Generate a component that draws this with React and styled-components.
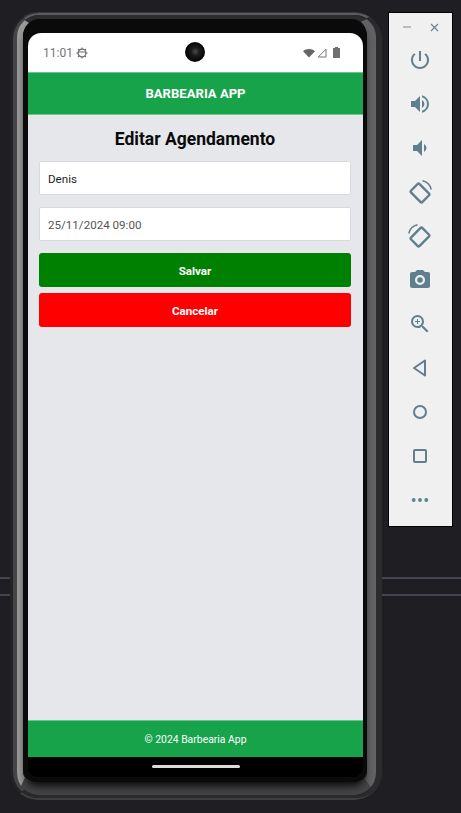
import React from "react";
import styled, { createGlobalStyle } from "styled-components";

const Global = createGlobalStyle`
  html, body { margin: 0; padding: 0; background: #1e1e23; }
  * { box-sizing: border-box; }
`;

const Page = styled.div`
  width: 461px;
  height: 813px;
  overflow: hidden;
  display: flex;
  align-items: flex-start;
  gap: 6px;
  padding: 12px 8px 13px 10px;
  font-family: Roboto, "Liberation Sans", sans-serif;
  background:
    linear-gradient(#45434f, #45434f) 0 577px / 100% 2px no-repeat,
    linear-gradient(#45434f, #45434f) 0 594px / 100% 2px no-repeat,
    #1e1e23;
`;

/* phone body is three nested rings, so the corners curve like the real frame */
const Phone = styled.div`
  width: 372px;
  height: 788px;
  flex: none;
  border-style: solid;
  border-color: #39393b transparent #3f3f41 #242427;
  border-width: 1px 0 2px 3px;
  border-radius: 28px;
`;

const Casing = styled.div`
  height: 100%;
  border-style: solid;
  border-color: #5c5c5e #2b2b2d #2a2a2c #454547;
  border-width: 2px 6px 3px 4px;
  border-radius: 26px;
`;

const Rail = styled.div`
  height: 100%;
  border-style: solid;
  border-color: #2c2c2e #626264 #454547 #9a9a9a;
  border-width: 4px 9px 13px 6px;
  border-radius: 22px;
`;

const Bezel = styled.div`
  height: 100%;
  padding: 14px 5px 5px;
  background: #0a0a0b;
  border-radius: 17px 17px 14px 14px;
  box-shadow: 0 7px 8px -3px #0a0a0b;
`;

const Screen = styled.div`
  position: relative;
  width: 335px;
  height: 744px;
  display: flex;
  flex-direction: column;
  overflow: hidden;
  background: #000;
  border-radius: 13px 13px 10px 10px;
`;

const StatusBar = styled.div`
  height: 39px;
  flex: none;
  display: flex;
  align-items: center;
  justify-content: space-between;
  padding: 0 23px 0 15px;
  background: #fff;
  color: #757575;
  font-size: 12px;
`;

const StatusGroup = styled.div`
  display: flex;
  align-items: center;
  gap: ${(p) => p.$gap}px;
`;

const CameraHole = styled.div`
  position: absolute;
  left: 157px;
  top: 9px;
  width: 20px;
  height: 20px;
  border-radius: 50%;
  background: radial-gradient(circle at 52% 48%, #4a4a4a 0, #1b1b1b 28%, #060606 65%);
`;

const GreenBar = styled.div`
  flex: none;
  height: ${(p) => p.$height}px;
  display: flex;
  align-items: center;
  justify-content: center;
  background: #16a34a;
  border-top: 1px solid #6cc48f;
  color: #fff;
  font-size: ${(p) => p.$size}px;
  font-weight: ${(p) => p.$weight};
`;

const Header = styled(GreenBar)`
  border-bottom: 1px solid #6cc48f;
`;

const Content = styled.main`
  flex: 1;
  display: flex;
  flex-direction: column;
  padding: 12px 12px 0 11px;
  background: #e5e7eb;
`;

const Title = styled.h1`
  margin: 0 0 9px;
  height: 25px;
  line-height: 25px;
  text-align: center;
  font-size: 17.5px;
  font-weight: 700;
  color: #0a0a0a;
`;

const Field = styled.input`
  width: 312px;
  height: 34px;
  margin-bottom: 12px;
  padding: 2px 8px 0;
  background: #fff;
  border: 1px solid #d8dbe0;
  border-radius: 2px;
  outline: none;
  font-family: inherit;
  font-size: 11.6px;
  color: ${(p) => p.$color};
`;

const Button = styled.button`
  width: 312px;
  height: 34px;
  margin-bottom: 6px;
  padding: 2px 0 0;
  border: 0;
  border-radius: 3px;
  background: ${(p) => p.$bg};
  color: #fff;
  font-family: inherit;
  font-size: 11.6px;
  font-weight: 700;
`;

const NavBar = styled.div`
  height: 20px;
  flex: none;
  display: flex;
  justify-content: center;
  padding-top: 8px;
  background: #000;
`;

const HomeIndicator = styled.div`
  width: 88px;
  height: 3px;
  border-radius: 2px;
  background: #dcdcdc;
`;

const Panel = styled.aside`
  width: 65px;
  height: 515px;
  flex: none;
  display: flex;
  flex-direction: column;
  align-items: center;
  background: #f0f0f0;
  border: 1px solid #000;
`;

const WindowControls = styled.div`
  height: 25px;
  width: 100%;
  display: flex;
  align-items: center;
  justify-content: center;
  gap: 19px;
  padding-top: 3px;
`;

const ToolList = styled.div`
  display: flex;
  flex-direction: column;
  align-items: center;
  margin-right: 1px;
`;

const Tool = styled.div`
  width: 44px;
  height: 44px;
  display: flex;
  align-items: center;
  justify-content: center;
`;

const INK = "#5f7f8e";

const ToolIcon = ({ children }) => (
  <Tool>
    <svg width="24" height="24" viewBox="0 0 24 24" fill={INK}>
      {children}
    </svg>
  </Tool>
);

const RotateShape = ({ flip }) => (
  <g transform={flip ? "translate(24 0) scale(-1 1)" : undefined} fill="none" stroke={INK}>
    <rect x="6" y="5" width="12" height="16" rx="1.5" strokeWidth="2.4" transform="rotate(-45 12 13)" />
    <path d="M14.5 .8A11.5 11.5 0 0 1 23.2 9.5" strokeWidth="1.5" />
  </g>
);

const App = () => (
  <>
    <Global />
    <Page>
      <Phone>
        <Casing>
          <Rail>
            <Bezel>
              <Screen>
                <CameraHole />
                <StatusBar>
                  <StatusGroup $gap={3}>
                    <span>11:01</span>
                    <svg width="12" height="12" viewBox="0 0 12 12" fill="none" stroke="#6f6f6f">
                      <circle cx="6" cy="6" r="3.9" strokeWidth="1.3" />
                      <path d="M2.2 5h7.6M6 .4v1.6M6 10v1.6M.4 6H2M10 6h1.6M2 2l1.2 1.2M8.8 8.8L10 10M10 2L8.8 3.2M3.2 8.8L2 10" strokeWidth="1.1" />
                    </svg>
                  </StatusGroup>
                  <StatusGroup $gap={2}>
                    <svg width="12" height="10" viewBox="0 0 12 10" fill="#666">
                      <path d="M0 3.2C3.2.2 8.8.2 12 3.2L6 9.6z" />
                    </svg>
                    <svg width="10" height="10" viewBox="0 0 10 10" fill="none" stroke="#777">
                      <path d="M9 1.2V9H1.2z" />
                    </svg>
                    <svg width="7" height="11" viewBox="0 0 7 11" fill="#707070" style={{ marginLeft: 4 }}>
                      <path d="M2 0h3v1h2v10H0V1h2z" />
                    </svg>
                  </StatusGroup>
                </StatusBar>
                <Header $height={43} $size={13.1} $weight={700}>BARBEARIA APP</Header>
                <Content>
                  <Title>Editar Agendamento</Title>
                  <Field defaultValue="Denis" $color="#1f1f1f" />
                  <Field defaultValue="25/11/2024 09:00" $color="#555" />
                  <Button $bg="#008000">Salvar</Button>
                  <Button $bg="#ff0000">Cancelar</Button>
                </Content>
                <GreenBar $height={37} $size={10.4} $weight={400}>© 2024 Barbearia App</GreenBar>
                <NavBar>
                  <HomeIndicator />
                </NavBar>
              </Screen>
            </Bezel>
          </Rail>
        </Casing>
      </Phone>
      <Panel>
        <WindowControls>
          <svg width="8" height="8" viewBox="0 0 8 8" stroke="#8b9aa2" strokeWidth="1.2">
            <path d="M0 4h8" />
          </svg>
          <svg width="9" height="9" viewBox="0 0 9 9" stroke="#6f8490" strokeWidth="1.2">
            <path d="M1 1l7 7M8 1L1 8" />
          </svg>
        </WindowControls>
        <ToolList>
          <ToolIcon>
            <path d="M13 3h-2v10h2V3zm4.83 2.17l-1.42 1.42A6.92 6.92 0 0 1 19 12c0 3.87-3.13 7-7 7s-7-3.13-7-7c0-2.19 1.01-4.14 2.58-5.42L6.17 5.17A8.93 8.93 0 0 0 3 12c0 4.97 4.03 9 9 9s9-4.03 9-9c0-2.74-1.23-5.18-3.17-6.83z" />
          </ToolIcon>
          <ToolIcon>
            <path d="M3 9v6h4l5 5V4L7 9H3zm13.5 3A4.5 4.5 0 0 0 14 7.97v8.05A4.5 4.5 0 0 0 16.5 12zM14 3.23v2.06a7 7 0 0 1 0 13.42v2.06a9 9 0 0 0 0-17.54z" />
          </ToolIcon>
          <ToolIcon>
            <path d="M5 9v6h4l5 5V4L9 9H5zm13.5 3A4.5 4.5 0 0 0 16 7.97v8.05A4.5 4.5 0 0 0 18.5 12z" />
          </ToolIcon>
          <ToolIcon>
            <RotateShape />
          </ToolIcon>
          <ToolIcon>
            <RotateShape flip />
          </ToolIcon>
          <ToolIcon>
            <path fillRule="evenodd" d="M9 2L7.17 4H4a2 2 0 0 0-2 2v12a2 2 0 0 0 2 2h16a2 2 0 0 0 2-2V6a2 2 0 0 0-2-2h-3.17L15 2H9zm3 15a5 5 0 1 1 0-10 5 5 0 0 1 0 10zm0-2.2a2.8 2.8 0 1 0 0-5.6 2.8 2.8 0 0 0 0 5.6z" />
          </ToolIcon>
          <ToolIcon>
            <path d="M15.5 14h-.79l-.28-.27A6.47 6.47 0 0 0 16 9.5 6.5 6.5 0 1 0 9.5 16c1.61 0 3.09-.59 4.23-1.57l.27.28v.79l5 4.99L20.49 19l-4.99-5zm-6 0C7.01 14 5 11.99 5 9.5S7.01 5 9.5 5 14 7.01 14 9.5 11.99 14 9.5 14zm2.5-4h-2v2H9v-2H7V9h2V7h1v2h2v1z" />
          </ToolIcon>
          <ToolIcon>
            <path d="M17 19.5L6 12l11-7.5v15z" fill="none" stroke={INK} strokeWidth="2" strokeLinejoin="round" />
          </ToolIcon>
          <ToolIcon>
            <circle cx="12" cy="12" r="6" fill="none" stroke={INK} strokeWidth="2" />
          </ToolIcon>
          <ToolIcon>
            <rect x="6" y="6" width="12" height="12" rx="1" fill="none" stroke={INK} strokeWidth="2" />
          </ToolIcon>
          <ToolIcon>
            <circle cx="5.7" cy="12" r="1.9" />
            <circle cx="12" cy="12" r="1.9" />
            <circle cx="18.3" cy="12" r="1.9" />
          </ToolIcon>
        </ToolList>
      </Panel>
    </Page>
  </>
);

export default App;
